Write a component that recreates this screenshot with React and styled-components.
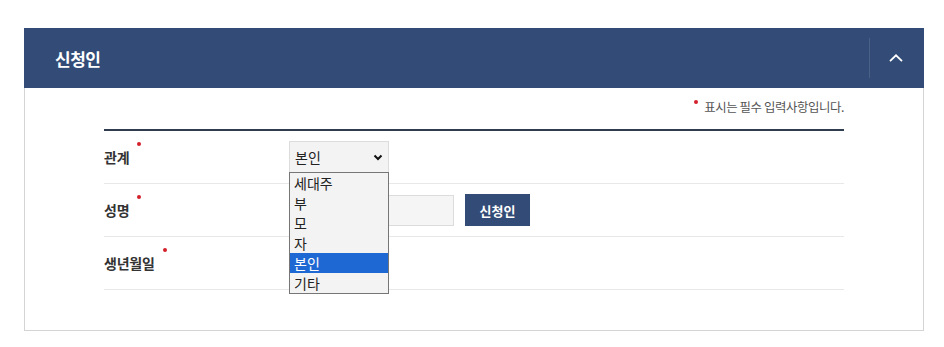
import React from 'react'
import styled, { createGlobalStyle } from 'styled-components';

const GlobalStyle = createGlobalStyle`
    body {
        margin: 0;
        background: #fff;
        font-family: "Noto Sans CJK KR", "Noto Sans", sans-serif;
        color: #333;
    }
`

const options = ['세대주', '부', '모', '자', '본인', '기타'];

const StyledPage = styled.div`
    padding: 28px 20px 0 24px;
`
const StyledPanel = styled.section`
    width: 898px;
    border: 1px solid #d4d4d4;
    border-top: 0;
`
const StyledHeader = styled.header`
    height: 60px;
    margin: 0 -1px;
    background: #334c77;
    display: flex;
    align-items: center;
`
const StyledTitle = styled.h2`
    flex: 1;
    margin: 0;
    padding-left: 31px;
    color: #fff;
    font-size: 17px;
    font-weight: 700;
    letter-spacing: -0.5px;
`
const StyledToggle = styled.button`
    width: 52px;
    height: 40px;
    margin-right: 3px;
    border: 0;
    border-left: 1px solid #4a6087;
    background: transparent;
    display: flex;
    align-items: center;
    justify-content: center;
    padding: 0;
    cursor: pointer;
`
const StyledBody = styled.div`
    padding: 9px 79px 40px 79px;
`
const StyledNote = styled.p`
    margin: 0 0 12px;
    display: flex;
    justify-content: flex-end;
    align-items: flex-start;
    font-size: 12.4px;
    line-height: 20px;
    color: #555;
    letter-spacing: -0.4px;
`
const StyledDot = styled.span`
    display: inline-block;
    width: 4px;
    height: 4px;
    border-radius: 50%;
    background: #d3212b;
    margin: ${p => p.$top}px ${p => p.$gap}px 0 ${p => p.$left}px;
    flex: none;
`
const StyledTable = styled.div`
    border-top: 2px solid #2f3d4f;
`
const StyledRow = styled.div`
    display: flex;
    align-items: center;
    height: 52px;
    border-bottom: 1px solid #e8e8e8;
`
const StyledLabel = styled.div`
    width: 185px;
    display: flex;
    align-items: flex-start;
    font-size: 14px;
    font-weight: 700;
    line-height: 20px;
    color: #333;
    letter-spacing: -0.2px;
`
const StyledField = styled.div`
    display: flex;
    align-items: center;
    gap: 11px;
    position: relative;
`
const StyledSelect = styled.div`
    height: 30px;
    border: 1px solid #dcdcdc;
    background: #f3f3f3;
    display: flex;
    align-items: center;
    justify-content: space-between;
    padding: 0 5px 0 5px;
    box-sizing: content-box;
    width: 88px;
    font-size: 14px;
    color: #222;
`
const StyledList = styled.ul`
    position: absolute;
    top: 31px;
    left: 0;
    z-index: 5;
    margin: 0;
    padding: 0;
    list-style: none;
    width: 98px;
    border: 1px solid #767676;
    background: #f3f3f3;
`
const StyledOption = styled.li`
    height: 20px;
    line-height: 20px;
    padding-left: 4px;
    font-size: 14px;
    color: ${p => p.$active ? '#fff' : '#222'};
    background: ${p => p.$active ? '#1e68d3' : 'transparent'};
`
const StyledInput = styled.input`
    width: 163px;
    height: 29px;
    border: 1px solid #dcdcdc;
    background: #f5f5f5;
    padding: 0;
`
const StyledButton = styled.button`
    width: 65px;
    height: 32px;
    border: 0;
    background: #334c77;
    color: #fff;
    font-family: inherit;
    font-size: 13px;
    font-weight: 700;
`

const Label = ({ children }) => (
    <StyledLabel>
        {children}
        <StyledDot $top={-5} $left={8} $gap={0} />
    </StyledLabel>
)

export default function App() {
    return (
        <StyledPage>
            <GlobalStyle />
            <StyledPanel>
                <StyledHeader>
                    <StyledTitle>신청인</StyledTitle>
                    <StyledToggle aria-label="접기">
                        <svg width="14" height="8" viewBox="0 0 14 8">
                            <path d="M1 7.2 L7 1.3 L13 7.2" fill="none" stroke="#fff" strokeWidth="1.8" />
                        </svg>
                    </StyledToggle>
                </StyledHeader>
                <StyledBody>
                    <StyledNote>
                        <StyledDot $top={3} $left={0} $gap={6} />
                        표시는 필수 입력사항입니다.
                    </StyledNote>
                    <StyledTable>
                        <StyledRow>
                            <Label>관계</Label>
                            <StyledField>
                                <StyledSelect>
                                    본인
                                    <svg width="10" height="7" viewBox="0 0 10 7">
                                        <path d="M1.5 1.5 L5 5 L8.5 1.5" fill="none" stroke="#111" strokeWidth="2" />
                                    </svg>
                                </StyledSelect>
                                <StyledList>
                                    {options.map(item =>
                                        <StyledOption key={item} $active={item === '본인'}>{item}</StyledOption>
                                    )}
                                </StyledList>
                            </StyledField>
                        </StyledRow>
                        <StyledRow>
                            <Label>성명</Label>
                            <StyledField>
                                <StyledInput type="text" />
                                <StyledButton>신청인</StyledButton>
                            </StyledField>
                        </StyledRow>
                        <StyledRow>
                            <Label>생년월일</Label>
                            <StyledField />
                        </StyledRow>
                    </StyledTable>
                </StyledBody>
            </StyledPanel>
        </StyledPage>
    )
}
